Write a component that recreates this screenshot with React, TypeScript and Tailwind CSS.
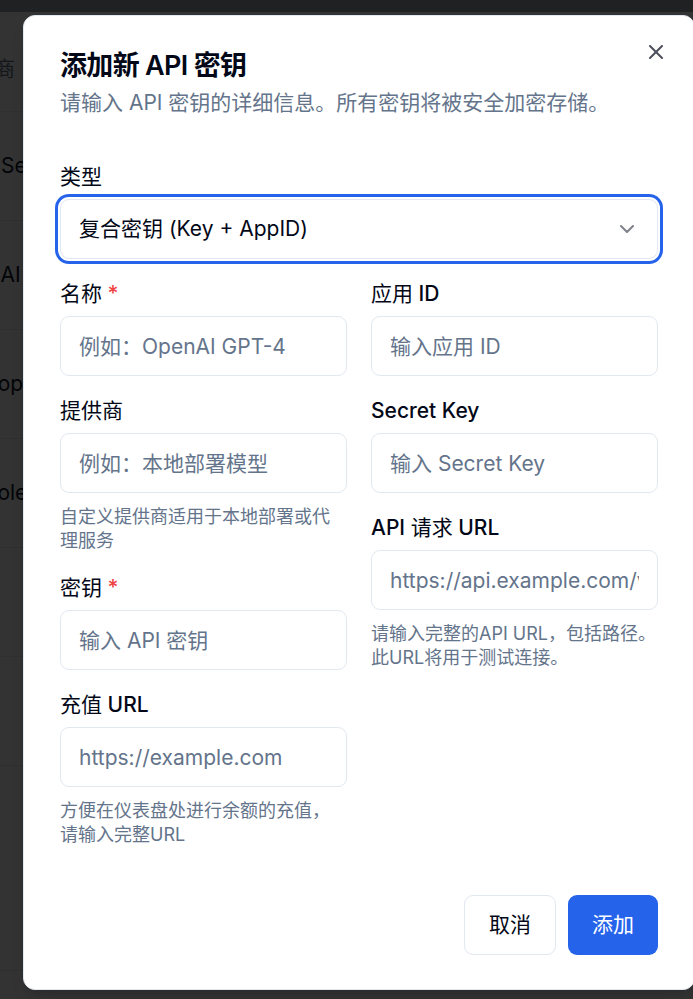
import React from "react";
import { X, ChevronDown } from "lucide-react";

function Field({
  label,
  required,
  placeholder,
  help,
}: {
  label: React.ReactNode;
  required?: boolean;
  placeholder: string;
  help?: React.ReactNode;
}) {
  return (
    <div className="flex flex-col gap-[12px]">
      <label className="text-[21px] leading-none font-medium text-[#020817]">
        {label}
        {required && <span className="text-[#ef4444]"> *</span>}
      </label>
      <input
        placeholder={placeholder}
        className="h-[60px] w-full rounded-[9px] border border-[#e2e8f0] bg-white px-[18px] text-[21px] text-[#020817] outline-none placeholder:text-[#64748b]"
      />
      {help && <p className="text-[18px] leading-[24px] text-[#64748b]">{help}</p>}
    </div>
  );
}

function Cjk({ children }: { children: React.ReactNode }) {
  return <span className="font-normal">{children}</span>;
}

export default function App() {
  return (
    <div className="relative h-[999px] w-[693px] overflow-hidden bg-white font-[Inter,'Noto_Sans_CJK_SC',sans-serif]">
      {/* underlying page */}
      <div className="flex flex-col">
        <div className="h-[12px] bg-[#9ca3af]" />
        <div className="flex h-[100px] items-end whitespace-nowrap border-b border-[#e2e8f0] pb-[27px]">
          <span className="ml-[-48px] text-[21px] text-[#64748b]">供应商</span>
        </div>
        <div className="flex h-[109px] items-center whitespace-nowrap border-b border-[#e2e8f0]">
          <span className="ml-[1px] text-[21px] text-[#0f172a]">SenseTime</span>
        </div>
        <div className="flex h-[109px] items-center whitespace-nowrap border-b border-[#e2e8f0]">
          <span className="ml-[-53px] text-[21px] text-[#0f172a]">OpenAI</span>
        </div>
        <div className="flex h-[109px] items-center whitespace-nowrap border-b border-[#e2e8f0]">
          <span className="ml-[-56px] text-[21px] text-[#0f172a]">Anthropic</span>
        </div>
        <div className="flex h-[109px] items-center whitespace-nowrap border-b border-[#e2e8f0]">
          <span className="ml-[-54px] text-[21px] text-[#0f172a]">Console</span>
        </div>
        <div className="h-[109px] border-b border-[#e2e8f0]" />
        <div className="h-[109px] border-b border-[#e2e8f0]" />
        <div className="h-[205px] border-b border-[#e2e8f0]" />
      </div>

      {/* overlay */}
      <div className="absolute inset-0 bg-black/80" />

      {/* dialog */}
      <div className="absolute left-[23px] top-[15px] flex h-[975px] w-[672px] flex-col rounded-[12px] border border-[#e2e8f0] bg-white px-[36px] pb-[34px] pt-[36px] shadow-lg">
        <button className="absolute right-[26px] top-[24px] text-[#020817] opacity-70">
          <X size={24} strokeWidth={2} />
        </button>

        <div className="flex flex-col gap-[9px]">
          <h2 className="text-[27px] font-semibold leading-none tracking-tight text-[#020817]">
            添加新 API 密钥
          </h2>
          <p className="text-[21px] leading-[30px] text-[#64748b]">
            请输入 API 密钥的详细信息。所有密钥将被安全加密存储。
          </p>
        </div>

        <div className="mt-[48px] flex flex-col gap-[12px]">
          <label className="text-[21px] leading-none font-normal text-[#020817]">类型</label>
          <div className="flex h-[60px] items-center justify-between rounded-[9px] border border-[#e2e8f0] bg-white px-[18px] text-[21px] text-[#020817] ring-[3px] ring-[#2563eb] ring-offset-[2px]">
            <span>复合密钥 (Key + AppID)</span>
            <ChevronDown size={24} className="opacity-50" />
          </div>
        </div>

        <div className="mt-[24px] grid grid-cols-2 gap-x-[24px]">
          <div className="flex flex-col gap-[24px]">
            <Field label={<Cjk>名称</Cjk>} required placeholder="例如：OpenAI GPT-4" />
            <Field
              label={<Cjk>提供商</Cjk>}
              placeholder="例如：本地部署模型"
              help="自定义提供商适用于本地部署或代理服务"
            />
            <Field label={<Cjk>密钥</Cjk>} required placeholder="输入 API 密钥" />
            <Field
              label={
                <>
                  <Cjk>充值</Cjk> URL
                </>
              }
              placeholder="https://example.com"
              help="方便在仪表盘处进行余额的充值，请输入完整URL"
            />
          </div>
          <div className="flex flex-col gap-[24px]">
            <Field
              label={
                <>
                  <Cjk>应用</Cjk> ID
                </>
              }
              placeholder="输入应用 ID"
            />
            <Field label="Secret Key" placeholder="输入 Secret Key" />
            <Field
              label={
                <>
                  API <Cjk>请求</Cjk> URL
                </>
              }
              placeholder="https://api.example.com/v1/chat/completions"
              help="请输入完整的API URL，包括路径。此URL将用于测试连接。"
            />
          </div>
        </div>

        <div className="mt-auto flex justify-end gap-[12px]">
          <button className="h-[60px] rounded-[9px] border border-[#e2e8f0] bg-white px-[24px] text-[21px] font-normal text-[#020817]">
            取消
          </button>
          <button className="h-[60px] rounded-[9px] bg-[#2563eb] px-[24px] text-[21px] font-normal text-white">
            添加
          </button>
        </div>
      </div>
    </div>
  );
}
